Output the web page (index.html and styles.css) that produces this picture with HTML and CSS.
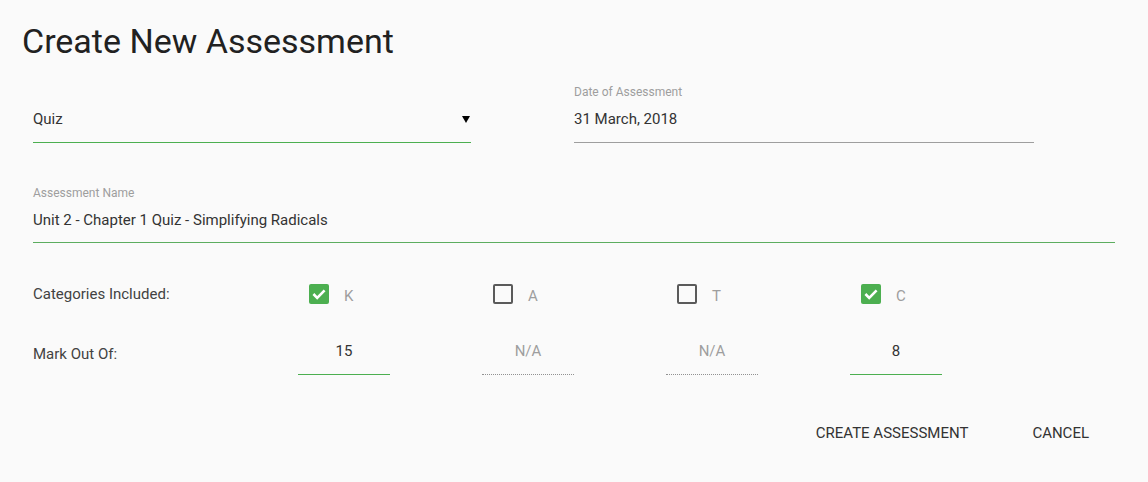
FILE: index.html
```html
<!DOCTYPE html>
<html>
<head>
<meta charset="utf-8">
<link rel="stylesheet" href="styles.css">
</head>
<body>
<div class="modal">
  <h1 class="title">Create New Assessment</h1>
  <div class="row-top">
    <div class="field">
      <div class="label"></div>
      <div class="value select">
        <span>Quiz</span>
        <svg class="caret" width="8" height="7" viewBox="0 0 8 7"><path d="M0 0H8L4 7Z" fill="#000"/></svg>
      </div>
    </div>
    <div class="field">
      <div class="label">Date of Assessment</div>
      <div class="value grey-line">31 March, 2018</div>
    </div>
  </div>
  <div class="field name-field">
    <div class="label">Assessment Name</div>
    <div class="value green-line soft">Unit 2 - Chapter 1 Quiz - Simplifying Radicals</div>
  </div>
  <div class="cat-row">
    <div class="row-label">Categories Included:</div>
    <div class="cat-col"><span class="box checked"><svg width="20" height="20" viewBox="0 0 20 20"><path d="M4.4 10L8.2 13.8L15.6 6.4" fill="none" stroke="#fff" stroke-width="2.6"/></svg></span><span class="cat-label">K</span></div>
    <div class="cat-col"><span class="box"></span><span class="cat-label">A</span></div>
    <div class="cat-col"><span class="box"></span><span class="cat-label">T</span></div>
    <div class="cat-col"><span class="box checked"><svg width="20" height="20" viewBox="0 0 20 20"><path d="M4.4 10L8.2 13.8L15.6 6.4" fill="none" stroke="#fff" stroke-width="2.6"/></svg></span><span class="cat-label">C</span></div>
  </div>
  <div class="mark-row">
    <div class="row-label">Mark Out Of:</div>
    <div class="mark-col"><div class="mark green-line">15</div></div>
    <div class="mark-col"><div class="mark disabled">N/A</div></div>
    <div class="mark-col"><div class="mark disabled">N/A</div></div>
    <div class="mark-col"><div class="mark green-line">8</div></div>
  </div>
  <div class="footer">
    <span class="btn">CREATE ASSESSMENT</span>
    <span class="btn">CANCEL</span>
  </div>
</div>
</body>
</html>
```

FILE: styles.css
```css
html, body {
  margin: 0;
  padding: 0;
  background: #fafafa;
}
body {
  font-family: Roboto, "Liberation Sans", sans-serif;
  color: rgba(0, 0, 0, 0.8);
  width: 1148px;
  height: 482px;
  overflow: hidden;
}
.modal {
  padding: 0 0 0 33px;
}
.title {
  margin: 21px 0 0 -11px;
  font-size: 34px;
  line-height: 40px;
  font-weight: 400;
  color: #212121;
}
.row-top {
  display: grid;
  grid-template-columns: 438px 460px;
  column-gap: 103px;
  margin-top: 23px;
}
.field .label {
  height: 16px;
  font-size: 12px;
  line-height: 16px;
  color: #9e9e9e;
}
.field .value {
  font-size: 15px;
  line-height: 20px;
  padding: 9px 0 13px;
  color: #333;
  border-bottom: 1px solid #9e9e9e;
}
.value.select {
  display: flex;
  justify-content: space-between;
  align-items: center;
  border-bottom-color: #4caf50;
}
.caret {
  margin-right: 1px;
}
.name-field {
  width: 1082px;
  margin-top: 41px;
}
.name-field .label {
  padding-top: 1px;
}
.name-field .value {
  padding-bottom: 12px;
}
.value.green-line.soft {
  border-bottom-color: #5cad5f;
}
.cat-row, .mark-row {
  display: flex;
}
.cat-row {
  margin-top: 36px;
  height: 30px;
  align-items: center;
}
.row-label {
  width: 265px;
  font-size: 15px;
  line-height: 30px;
  color: #424242;
}
.cat-col {
  width: 184px;
  display: flex;
  align-items: center;
  padding-left: 11px;
  box-sizing: border-box;
}
.box {
  width: 20px;
  height: 20px;
  box-sizing: border-box;
  border: 2px solid #5a5a5a;
  border-radius: 2px;
  display: block;
}
.box.checked {
  border: none;
  background: #4caf50;
}
.box svg {
  display: block;
}
.cat-label {
  margin-left: 15px;
  font-size: 15px;
  line-height: 20px;
  color: #9e9e9e;
  padding-top: 3px;
}
.mark-row {
  margin-top: 30px;
  align-items: flex-start;
}
.mark-col {
  width: 184px;
}
.mark {
  width: 92px;
  text-align: center;
  font-size: 15px;
  line-height: 20px;
  padding: 2px 0 13px;
  color: #333;
}
.mark.green-line {
  border-bottom: 1px solid #4caf50;
}
.mark.disabled {
  color: #9e9e9e;
  border-bottom: 1px dotted rgba(0, 0, 0, 0.42);
}
.footer {
  display: flex;
  justify-content: flex-end;
  margin-top: 40px;
  padding-right: 27px;
}
.btn {
  font-size: 15px;
  line-height: 36px;
  padding: 0 32px;
  color: #333;
}
```
